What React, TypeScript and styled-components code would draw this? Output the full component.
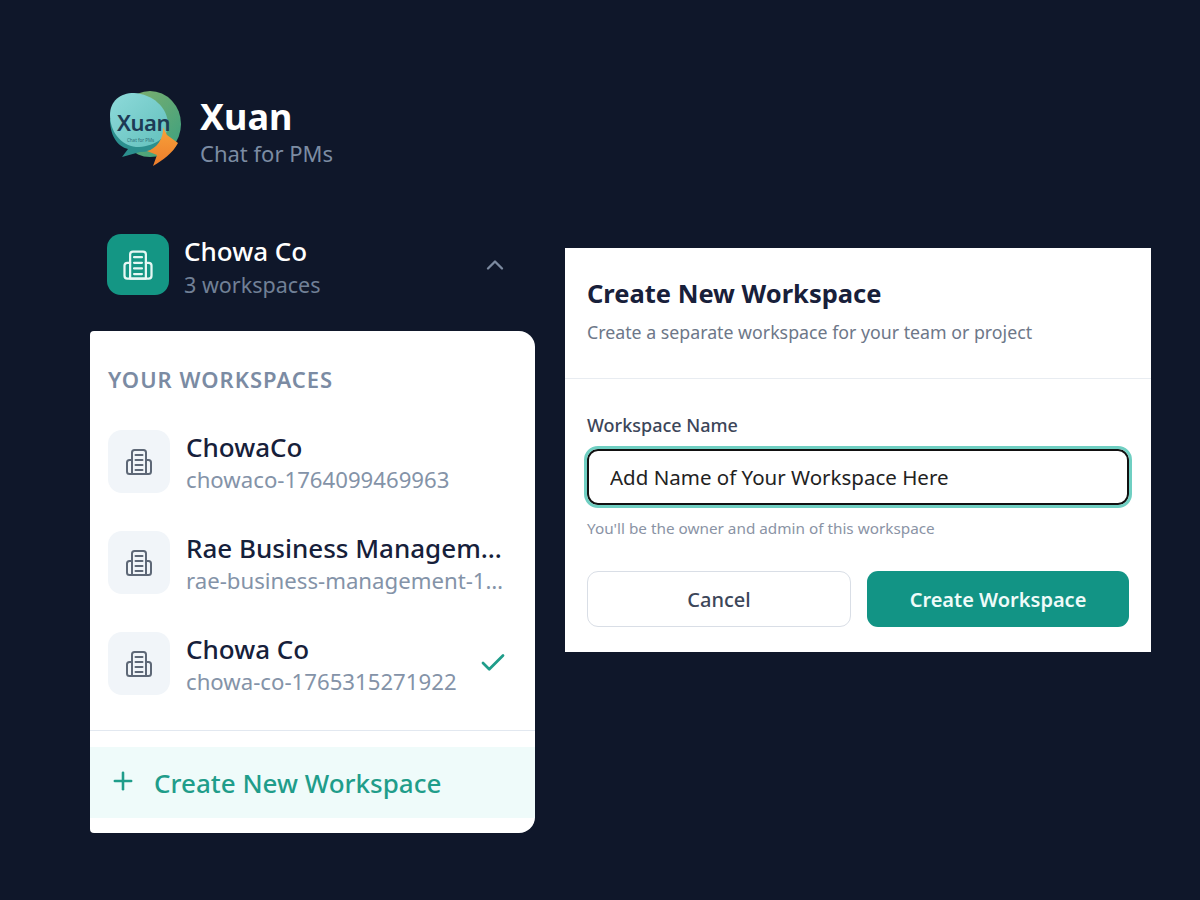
import styled, { createGlobalStyle } from "styled-components";
import { Check, ChevronUp, Plus } from "lucide-react";

const GlobalStyle = createGlobalStyle`
  html, body { margin: 0; padding: 0; background: #0f172a; }
  * { box-sizing: border-box; }
  body { font-family: "Noto Sans", "Open Sans", sans-serif; }
`;

const workspaces = [
  { name: "ChowaCo", slug: "chowaco-1764099469963" },
  { name: "Rae Business Management Group", slug: "rae-business-management-1765300000000" },
  { name: "Chowa Co", slug: "chowa-co-1765315271922", active: true },
];

const BuildingIcon = ({ size = 32 }: { size?: number }) => (
  <svg width={size} height={size} viewBox="0 0 32 32" fill="none" stroke="currentColor" strokeWidth="2" strokeLinecap="round" strokeLinejoin="round">
    <path d="M9 28V6.5A2.5 2.5 0 0 1 11.5 4h9A2.5 2.5 0 0 1 23 6.5V28Z" />
    <path d="M9 14H6.5A2.5 2.5 0 0 0 4 16.5v9A2.5 2.5 0 0 0 6.5 28H25.5a2.5 2.5 0 0 0 2.5-2.5v-9a2.5 2.5 0 0 0-2.5-2.5H23" />
    <path d="M12.5 9h7M12.5 14h7M12.5 19h7M12.5 24h7" />
  </svg>
);

const XuanLogo = () => (
  <svg width="74" height="78" viewBox="0 0 74 78">
    <defs>
      <linearGradient id="bubbleBack" x1="0" y1="0" x2="1" y2="1">
        <stop offset="0" stopColor="#86b06c" />
        <stop offset="1" stopColor="#38a080" />
      </linearGradient>
      <linearGradient id="bubbleFront" x1="0" y1="0" x2="1" y2="1">
        <stop offset="0" stopColor="#8edada" />
        <stop offset="1" stopColor="#62c0bc" />
      </linearGradient>
      <linearGradient id="arrow" x1="0" y1="0" x2="0" y2="1">
        <stop offset="0" stopColor="#f7a23a" />
        <stop offset="1" stopColor="#ee7d2b" />
      </linearGradient>
    </defs>
    <ellipse cx="42" cy="35" rx="31" ry="33" fill="url(#bubbleBack)" />
    <path d="M2 30C2 50 12 58 20 60L14 68L32 63C46 63 54 56 56 46Z" fill="#2c8f8e" />
    <path d="M2 26C2 12 12 4 26 4C44 5 60 18 60 36C60 50 44 58 28 58C12 56 2 42 2 26Z" fill="url(#bubbleFront)" />
    <Wordmark x="9" y="42">Xuan</Wordmark>
    <Tagline x="19" y="53">Chat for PMs</Tagline>
    <path d="M55 38L59 46L70 54C65 64 55 71 45 77L49 66L39 62C48 60 56 50 55 38Z" fill="url(#arrow)" />
  </svg>
);

export default function App() {
  return (
    <>
      <GlobalStyle />
      <Page>
        <Sidebar>
          <Brand>
            <XuanLogo />
            <BrandText>
              <BrandName>Xuan</BrandName>
              <BrandTag>Chat for PMs</BrandTag>
            </BrandText>
          </Brand>

          <Switcher>
            <SwitcherIcon>
              <BuildingIcon size={36} />
            </SwitcherIcon>
            <SwitcherText>
              <SwitcherName>Chowa Co</SwitcherName>
              <SwitcherCount>3 workspaces</SwitcherCount>
            </SwitcherText>
            <ChevronUp size={28} color="#7c8aa0" strokeWidth={2} />
          </Switcher>

          <Menu>
            <MenuHeading>YOUR WORKSPACES</MenuHeading>
            <MenuList>
              {workspaces.map((w) => (
                <MenuRow key={w.slug}>
                  <RowIcon>
                    <BuildingIcon size={32} />
                  </RowIcon>
                  <RowText>
                    <RowName>{w.name}</RowName>
                    <RowSlug>{w.slug}</RowSlug>
                  </RowText>
                  {w.active && <ActiveCheck size={30} strokeWidth={2.2} />}
                </MenuRow>
              ))}
            </MenuList>
            <MenuFooter>
              <CreateRow>
                <CreatePlus size={28} strokeWidth={2.2} />
                Create New Workspace
              </CreateRow>
            </MenuFooter>
          </Menu>
        </Sidebar>

        <Dialog>
          <DialogHead>
            <DialogTitle>Create New Workspace</DialogTitle>
            <DialogSub>Create a separate workspace for your team or project</DialogSub>
          </DialogHead>
          <DialogBody>
            <FieldLabel>Workspace Name</FieldLabel>
            <NameInput readOnly value="Add Name of Your Workspace Here" />
            <Hint>You'll be the owner and admin of this workspace</Hint>
            <Actions>
              <CancelButton>Cancel</CancelButton>
              <CreateButton>Create Workspace</CreateButton>
            </Actions>
          </DialogBody>
        </Dialog>
      </Page>
    </>
  );
}

const Page = styled.div`
  width: 1200px;
  height: 900px;
  background: #0f172a;
  display: flex;
  align-items: flex-start;
  gap: 30px;
  padding-left: 90px;
  overflow: hidden;
`;

const Sidebar = styled.div`
  width: 445px;
  padding-top: 89px;
  display: flex;
  flex-direction: column;
`;

const Brand = styled.div`
  display: flex;
  align-items: center;
  gap: 18px;
  padding-left: 18px;
  height: 78px;
`;

const BrandText = styled.div`
  display: flex;
  flex-direction: column;
  padding-top: 9px;
`;

const BrandName = styled.div`
  font-size: 36px;
  line-height: 42px;
  font-weight: 700;
  color: #fff;
`;

const BrandTag = styled.div`
  font-size: 22px;
  line-height: 31px;
  color: #7c8ca3;
`;

const Wordmark = styled.text`
  font-family: "Noto Sans", sans-serif;
  font-size: 22px;
  font-weight: 600;
  letter-spacing: -0.5px;
  fill: #1d3a55;
`;

const Tagline = styled.text`
  font-family: "Noto Sans", sans-serif;
  font-size: 4.5px;
  fill: #2f6f78;
`;

const Switcher = styled.div`
  margin-top: 67px;
  height: 61px;
  display: flex;
  align-items: center;
  padding: 0 26px 0 17px;
`;

const SwitcherIcon = styled.div`
  width: 62px;
  height: 61px;
  border-radius: 14px;
  background: #149684;
  color: #e6f7f4;
  display: flex;
  align-items: center;
  justify-content: center;
  margin-right: 15px;
`;

const SwitcherText = styled.div`
  flex: 1;
  display: flex;
  flex-direction: column;
  padding-top: 5px;
`;

const SwitcherName = styled.div`
  font-size: 26px;
  line-height: 36px;
  font-weight: 500;
  color: #fff;
`;

const SwitcherCount = styled.div`
  font-size: 21.5px;
  line-height: 32px;
  color: #718096;
`;

const Menu = styled.div`
  margin-top: 36px;
  height: 502px;
  background: #fff;
  border-radius: 4px 16px 16px 4px;
  display: flex;
  flex-direction: column;
`;

const MenuHeading = styled.div`
  padding: 33px 18px 0;
  font-size: 22px;
  line-height: 30px;
  font-weight: 600;
  letter-spacing: 1px;
  color: #7b8ba3;
`;

const MenuList = styled.div`
  margin-top: 36px;
  display: flex;
  flex-direction: column;
  gap: 38px;
`;

const MenuRow = styled.div`
  height: 63px;
  display: flex;
  align-items: center;
  padding: 0 27px 0 18px;
`;

const RowIcon = styled.div`
  width: 62px;
  height: 63px;
  flex: none;
  border-radius: 14px;
  background: #f1f5f9;
  color: #5e6877;
  display: flex;
  align-items: center;
  justify-content: center;
  margin-right: 16px;
`;

const RowText = styled.div`
  flex: 1;
  min-width: 0;
  max-width: 320px;
  display: flex;
  flex-direction: column;
  padding-top: 2px;
`;

const RowName = styled.div`
  font-size: 26px;
  line-height: 34px;
  font-weight: 500;
  color: #16203a;
  white-space: nowrap;
  overflow: hidden;
  text-overflow: ellipsis;
`;

const RowSlug = styled.div`
  font-size: 22.2px;
  line-height: 32px;
  color: #8493a8;
  white-space: nowrap;
  overflow: hidden;
  text-overflow: ellipsis;
`;

const ActiveCheck = styled(Check)`
  color: #1f9d8a;
  margin-left: auto;
  margin-bottom: 2px;
`;

const MenuFooter = styled.div`
  margin-top: 35px;
  border-top: 1px solid #e2e8f0;
  padding-top: 16px;
`;

const CreateRow = styled.div`
  height: 71px;
  background: #effbfa;
  display: flex;
  align-items: center;
  gap: 17px;
  padding-left: 19px;
  font-size: 26px;
  font-weight: 500;
  color: #1f9d8a;
`;

const CreatePlus = styled(Plus)`
  margin-bottom: 4px;
`;

const Dialog = styled.div`
  margin-top: 248px;
  width: 586px;
  height: 404px;
  background: #fff;
  display: flex;
  flex-direction: column;
`;

const DialogHead = styled.div`
  height: 131px;
  padding: 26px 22px 0;
  border-bottom: 1px solid #e8ecf1;
`;

const DialogTitle = styled.div`
  font-size: 25.5px;
  line-height: 38px;
  font-weight: 700;
  color: #18203a;
`;

const DialogSub = styled.div`
  margin-top: 6px;
  font-size: 17.75px;
  line-height: 28px;
  color: #6d7788;
`;

const DialogBody = styled.div`
  padding: 33px 22px 0;
  display: flex;
  flex-direction: column;
`;

const FieldLabel = styled.div`
  font-size: 18px;
  line-height: 27px;
  font-weight: 500;
  color: #3c4659;
`;

const NameInput = styled.input`
  margin-top: 10px;
  height: 56px;
  width: 100%;
  padding: 0 21px 0 21px;
  border: 2px solid #111;
  border-radius: 11px;
  outline: 3px solid #6fcfc2;
  outline-offset: 0;
  background: #fff;
  font-family: inherit;
  font-size: 20.5px;
  color: #222;
`;

const Hint = styled.div`
  margin-top: 12px;
  font-size: 15.3px;
  line-height: 22px;
  color: #8a93a5;
`;

const Actions = styled.div`
  margin-top: 32px;
  display: flex;
  gap: 16px;
`;

const CancelButton = styled.button`
  width: 264px;
  height: 56px;
  border: 1px solid #d9dee6;
  border-radius: 11px;
  background: #fff;
  font-family: inherit;
  font-size: 20px;
  font-weight: 500;
  color: #3c4659;
`;

const CreateButton = styled.button`
  width: 262px;
  height: 56px;
  border: none;
  border-radius: 11px;
  background: #129485;
  font-family: inherit;
  font-size: 20px;
  font-weight: 600;
  color: #eefbf9;
`;
